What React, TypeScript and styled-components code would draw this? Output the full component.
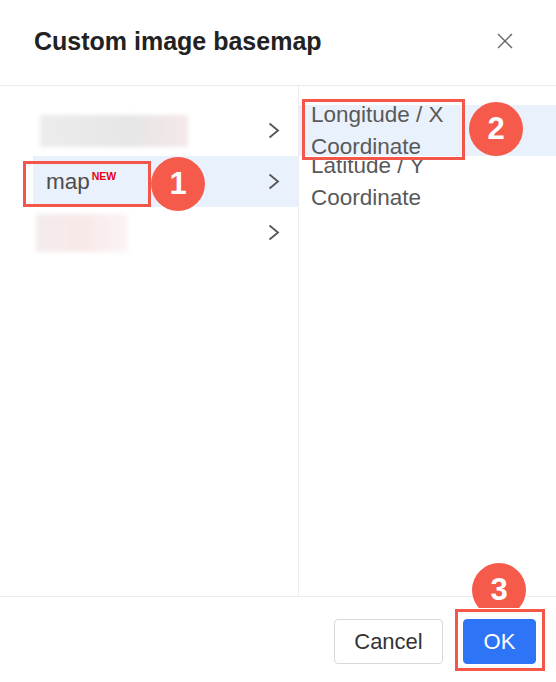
import React from "react";
import styled, { createGlobalStyle } from "styled-components";

type Category = {
  label?: string;
  isNew?: boolean;
  blur?: { width: number; height: number; offset: number; tone: "gray" | "pink" };
};

const categories: Category[] = [
  { blur: { width: 148, height: 32, offset: -6, tone: "gray" } },
  { label: "map", isNew: true },
  { blur: { width: 92, height: 38, offset: -10, tone: "pink" } },
];

const fields: string[] = ["Longitude / X Coordinate", "Latitude / Y Coordinate"];

const App: React.FC = () => {
  const activeCategory = 1;
  const activeField = 0;

  return (
    <>
      <GlobalStyle />
      <Dialog>
        <Header>
          <Title>Custom image basemap</Title>
          <CloseButton aria-label="Close">
            <svg width="16" height="16" viewBox="0 0 16 16">
              <path d="M1 1 L15 15 M15 1 L1 15" stroke="#666" strokeWidth="1.4" fill="none" />
            </svg>
          </CloseButton>
        </Header>

        <Body>
          <CategoryList>
            {categories.map((cat, i) => (
              <CategoryRow key={i} $active={i === activeCategory}>
                {cat.blur ? (
                  <BlurredLabel
                    $width={cat.blur.width}
                    $height={cat.blur.height}
                    $offset={cat.blur.offset}
                    $tone={cat.blur.tone}
                  />
                ) : (
                  <CategoryLabel>
                    {cat.label}
                    {cat.isNew && <NewTag>NEW</NewTag>}
                  </CategoryLabel>
                )}
                <svg width="12" height="17" viewBox="0 0 12 17">
                  <path d="M1.5 1.5 L10 8.5 L1.5 15.5" stroke="#555" strokeWidth="1.8" fill="none" />
                </svg>
              </CategoryRow>
            ))}
          </CategoryList>

          <FieldList>
            {fields.map((f, i) => (
              <FieldRow key={f} $active={i === activeField}>
                <FieldText>{f}</FieldText>
              </FieldRow>
            ))}
          </FieldList>
        </Body>

        <Footer>
          <Button>Cancel</Button>
          <Button $primary>OK</Button>
        </Footer>

        {/* tutorial callouts */}
        <Callout $x={23} $y={161} $w={128} $h={46} />
        <Badge $x={151} $y={157}>1</Badge>
        <Callout $x={302} $y={99} $w={163} $h={61} />
        <Badge $x={469} $y={102}>2</Badge>
        <Badge $x={472} $y={563} $cut={9}>3</Badge>
        <Callout $x={455} $y={609} $w={90} $h={62} />
      </Dialog>
    </>
  );
};

const GlobalStyle = createGlobalStyle`
  body {
    margin: 0;
    background: #fff;
    font-family: "Liberation Sans", Arial, sans-serif;
  }
`;

const Dialog = styled.div`
  position: relative;
  width: 556px;
  height: 682px;
  display: flex;
  flex-direction: column;
  background: #fff;
  overflow: hidden;
`;

const Header = styled.div`
  box-sizing: border-box;
  height: 86px;
  flex-shrink: 0;
  display: flex;
  align-items: center;
  justify-content: space-between;
  padding: 0 43px 3px 34px;
  border-bottom: 1px solid #ececec;
`;

const Title = styled.h1`
  margin: 0;
  font-size: 25px;
  font-weight: 700;
  line-height: 1;
  color: #222;
`;

const CloseButton = styled.button`
  border: 0;
  padding: 0;
  background: none;
  display: flex;
  cursor: pointer;
`;

const Body = styled.div`
  flex: 1;
  display: grid;
  grid-template-columns: 299px 1fr;
  min-height: 0;
`;

const CategoryList = styled.div`
  padding: 19px 0 0 33px;
  border-right: 1px solid #eeeeee;
`;

const CategoryRow = styled.div<{ $active?: boolean }>`
  height: 51px;
  display: flex;
  align-items: center;
  justify-content: space-between;
  padding: 0 18px 0 13px;
  background: ${(p) => (p.$active ? "#e9f1fd" : "transparent")};
`;

const CategoryLabel = styled.span`
  font-size: 22.5px;
  color: #4d4d4d;
  display: flex;
  align-items: flex-start;
`;

const NewTag = styled.sup`
  font-size: 10.5px;
  font-weight: 700;
  color: #e60012;
  margin-left: 2px;
  line-height: 1;
  vertical-align: top;
  position: relative;
  top: 2px;
`;

const BlurredLabel = styled.div<{
  $width: number;
  $height: number;
  $offset: number;
  $tone: "gray" | "pink";
}>`
  width: ${(p) => p.$width}px;
  height: ${(p) => p.$height}px;
  margin-left: ${(p) => p.$offset}px;
  filter: blur(2px);
  background: ${(p) =>
    p.$tone === "gray"
      ? "linear-gradient(90deg, #ececec, #e6e6e6 60%, #f6e8e8)"
      : "linear-gradient(90deg, #f3eded, #f8e8e8 50%, #fbf5f5)"};
`;

const FieldList = styled.div`
  padding-top: 19px;
`;

const FieldRow = styled.div<{ $active?: boolean }>`
  height: 51px;
  display: flex;
  align-items: center;
  padding-left: 12px;
  background: ${(p) => (p.$active ? "#e9f1fd" : "transparent")};
`;

const FieldText = styled.span`
  max-width: 190px;
  font-size: 22.5px;
  line-height: 32px;
  color: #595959;
`;

const Footer = styled.div`
  box-sizing: border-box;
  height: 86px;
  flex-shrink: 0;
  display: flex;
  justify-content: flex-end;
  align-items: flex-start;
  gap: 20px;
  padding: 22px 20px 0 0;
  border-top: 1px solid #ececec;
`;

const Button = styled.button<{ $primary?: boolean }>`
  box-sizing: border-box;
  height: 45px;
  width: ${(p) => (p.$primary ? "73px" : "109px")};
  border-radius: 4px;
  border: 1px solid ${(p) => (p.$primary ? "#2e74f6" : "#d9d9d9")};
  background: ${(p) => (p.$primary ? "#2e74f6" : "#fff")};
  color: ${(p) => (p.$primary ? "#fff" : "#333")};
  font-family: "Liberation Sans", Arial, sans-serif;
  font-size: 22px;
  padding: 0;
  cursor: pointer;
`;

const Callout = styled.div<{ $x: number; $y: number; $w: number; $h: number }>`
  position: absolute;
  box-sizing: border-box;
  left: ${(p) => p.$x}px;
  top: ${(p) => p.$y}px;
  width: ${(p) => p.$w}px;
  height: ${(p) => p.$h}px;
  border: 3px solid #f4574a;
`;

const Badge = styled.div<{ $x: number; $y: number; $cut?: number }>`
  position: absolute;
  left: ${(p) => p.$x}px;
  top: ${(p) => p.$y}px;
  width: 54px;
  height: 54px;
  border-radius: 50%;
  background: #f55a4b;
  color: #fff;
  font-size: 31px;
  font-weight: 700;
  display: flex;
  align-items: center;
  justify-content: center;
  clip-path: ${(p) => (p.$cut ? `inset(0 0 ${p.$cut}px 0)` : "none")};
`;

export default App;
